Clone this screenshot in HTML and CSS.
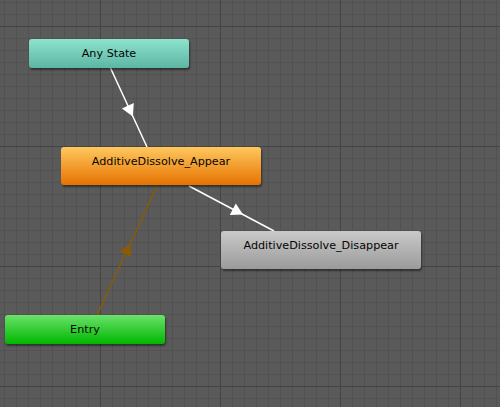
FILE: index.html
```
<!DOCTYPE html>
<html>
<head>
<meta charset="utf-8">
<link rel="stylesheet" href="styles.css">
</head>
<body>
<div class="graph">
  <svg class="links" width="500" height="407" viewBox="0 0 500 407">
    <line class="link" x1="110.5" y1="68" x2="147" y2="147"/>
    <polygon class="head" points="121.9,108.4 133.8,103.0 132.9,116.6"/>
    <line class="link" x1="189" y1="186" x2="274" y2="231"/>
    <polygon class="head" points="229.8,214.9 235.8,203.5 243,214.6"/>
    <line class="link entry-link" x1="97" y1="315" x2="157" y2="186"/>
    <polygon class="head entry-head" points="119.4,251.4 131.2,256.8 130.4,243.2"/>
  </svg>
  <div class="node any" style="left:29px;top:39px;width:160px;height:29px">Any State</div>
  <div class="node appear" style="left:61px;top:147px;width:200px;height:38px">AdditiveDissolve_Appear</div>
  <div class="node disappear" style="left:221px;top:231px;width:200px;height:38px">AdditiveDissolve_Disappear</div>
  <div class="node entry" style="left:5px;top:315px;width:160px;height:29px">Entry</div>
</div>
</body>
</html>
```

FILE: styles.css
```
html, body {
  margin: 0;
  padding: 0;
}
body {
  width: 500px;
  height: 407px;
  overflow: hidden;
  background: #595959;
}
.graph {
  position: relative;
  width: 500px;
  height: 407px;
  background-color: #5a5a5a;
  background-image:
    linear-gradient(to right, #444444 1px, transparent 1px),
    linear-gradient(to bottom, #444444 1px, transparent 1px),
    linear-gradient(to right, #525252 1px, transparent 1px),
    linear-gradient(to bottom, #525252 1px, transparent 1px);
  background-size: 120px 120px, 120px 120px, 12px 12px, 12px 12px;
  background-position: 100px 0, 0 26px, 4px 0, 0 2px;
}
.links {
  position: absolute;
  left: 0;
  top: 0;
  z-index: 1;
}
.link {
  stroke: #ffffff;
  stroke-width: 1.5;
}
.head {
  fill: #ffffff;
}
.entry-link {
  stroke: #8a5a05;
}
.entry-head {
  fill: #8a5a05;
}
.node {
  position: absolute;
  z-index: 2;
  box-sizing: border-box;
  display: flex;
  justify-content: center;
  align-items: flex-start;
  padding-top: 8px;
  border-radius: 3px;
  font-family: "DejaVu Sans", sans-serif;
  font-size: 11.2px;
  line-height: 13px;
  color: #050505;
  box-shadow: 1px 2px 2px rgba(0, 0, 0, 0.45);
  white-space: nowrap;
}
.any {
  background: linear-gradient(to bottom, #8ce4ce, #5db5a3);
}
.appear {
  background: linear-gradient(to bottom, #ffc85e, #e57300);
}
.disappear {
  background: linear-gradient(to bottom, #c9c9c9, #9b9b9b);
}
.entry {
  background: linear-gradient(to bottom, #6ae26a, #00b600);
}
```
